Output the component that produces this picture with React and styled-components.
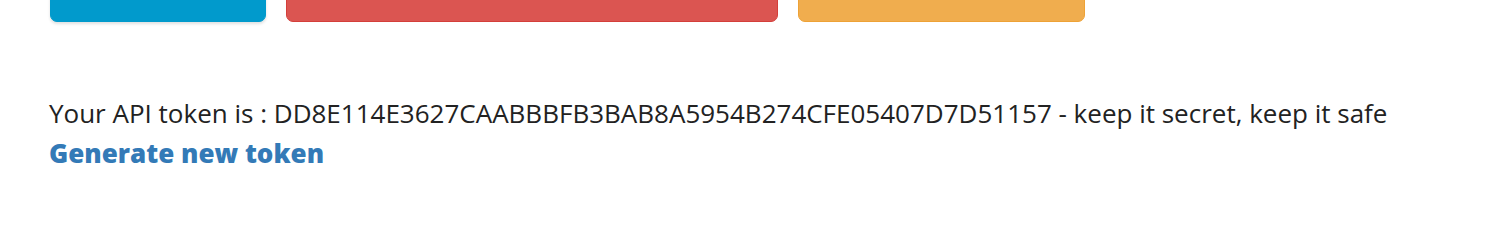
import React from "react";
import styled, { createGlobalStyle } from "styled-components";

const GlobalStyle = createGlobalStyle`
  html, body {
    margin: 0;
    padding: 0;
    background: #fff;
  }
  body {
    font-family: "Open Sans", "Liberation Sans", Arial, sans-serif;
    color: #222;
  }
`;

const Page = styled.div`
  padding: 0 50px 0 49px;
  margin-top: -24px;
`;

const ButtonRow = styled.div`
  display: flex;
  gap: 20px;
  padding-left: 1px;
`;

const colors = {
  blue: { bg: "#019acc", border: "#019acc", shadow: "0 2px 3px rgba(0,0,0,0.12)" },
  red: { bg: "#db5551", border: "#d43f3a", shadow: "none" },
  orange: { bg: "#f0ad4e", border: "#eea236", shadow: "none" },
};

const ActionButton = styled.button`
  width: ${(p) => p.$width}px;
  height: 46px;
  border: 1px solid ${(p) => colors[p.$kind].border};
  background: ${(p) => colors[p.$kind].bg};
  border-radius: 7px;
  box-shadow: ${(p) => colors[p.$kind].shadow};
  padding: 0;
  cursor: pointer;
`;

const TokenBlock = styled.div`
  margin-top: 71px;
  font-size: 26px;
  line-height: 40px;
`;

const TokenLine = styled.p`
  margin: 0;
`;

const GenerateLink = styled.a`
  display: inline-block;
  font-weight: 800;
  color: #337ab7;
  text-decoration: none;
  cursor: pointer;
`;

const labels = {
  tokenPrefix: "Your API token is : ",
  token: "DD8E114E3627CAABBBFB3BAB8A5954B274CFE05407D7D51157",
  tokenSuffix: " - keep it secret, keep it safe",
  generate: "Generate new token",
};

const App = () => {
  return (
    <Page>
      <GlobalStyle />
      <ButtonRow>
        <ActionButton $kind="blue" $width={216} aria-label="action" />
        <ActionButton $kind="red" $width={492} aria-label="delete" />
        <ActionButton $kind="orange" $width={287} aria-label="edit" />
      </ButtonRow>
      <TokenBlock>
        <TokenLine>
          {labels.tokenPrefix}
          {labels.token}
          {labels.tokenSuffix}
        </TokenLine>
        <GenerateLink href="#">{labels.generate}</GenerateLink>
      </TokenBlock>
    </Page>
  );
};

export default App;
